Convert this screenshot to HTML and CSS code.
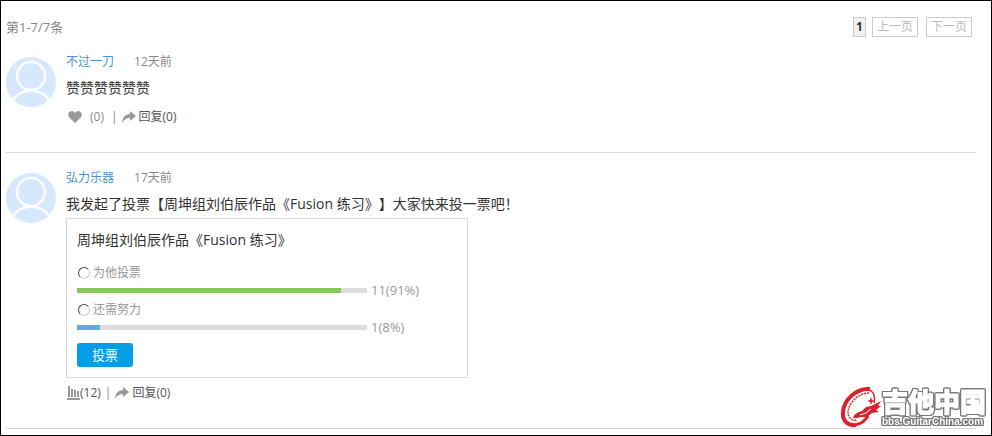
FILE: index.html
```html
<!DOCTYPE html>
<html lang="zh-CN">
<head>
    <meta charset="UTF-8">
    <meta name="viewport" content="width=device-width, initial-scale=1.0">
    <title>动态</title>
    <link rel="stylesheet" href="styles.css">
</head>
<body>
    <!-- shared icons -->
    <svg class="sprite" width="0" height="0" aria-hidden="true">
        <symbol id="icon-avatar" viewBox="0 0 50 50">
            <circle cx="25" cy="25" r="25" fill="#d5e8fc"/>
            <circle cx="25" cy="19" r="14" fill="none" stroke="#fff" stroke-width="2.4"/>
            <path d="M7 43C11 37 17 33.800 25 33.800S39 37 43 43" fill="none" stroke="#fff" stroke-width="2.400"/>
        </symbol>
        <symbol id="icon-reply" viewBox="0 0 14 12">
            <path d="M8 0l6 5-6 5V7C4.500 7 2 8.500 0 12 .5 6 3.500 3.200 8 3z" fill="#999"/>
        </symbol>
        <symbol id="icon-heart" viewBox="0 0 14 12">
            <path d="M7 12L1.300 6.600C-.6 4.600 0 .3 3.500 0 5.200 0 6.400.8 7 2 7.600.8 8.800 0 10.500 0 14 .3 14.600 4.600 12.700 6.600z" fill="#999"/>
        </symbol>
        <symbol id="icon-chart" viewBox="0 0 13 14">
            <path d="M1 0h2v11H1zM4 3h2v8H4zM7 4h2v7H7zM10 5h2v6h-2zM0 12h13v2H0z" fill="#999"/>
        </symbol>
    </svg>

    <div class="page">
        <div class="toolbar">
            <span class="count">第1-7/7条</span>
            <div class="pager">
                <span class="current">1</span>
                <button type="button" disabled>上一页</button>
                <button type="button" disabled>下一页</button>
            </div>
        </div>

        <div class="feed-item">
            <svg class="avatar"><use href="#icon-avatar"/></svg>
            <div class="feed-body">
                <div class="feed-meta">
                    <a href="#">不过一刀</a>
                    <span>12天前</span>
                </div>
                <p class="feed-text">赞赞赞赞赞赞</p>
                <div class="actions">
                    <a href="#" class="like"><svg class="icon-heart"><use href="#icon-heart"/></svg>(0)</a>
                    <span class="divider">|</span>
                    <a href="#" class="reply"><svg class="icon-reply"><use href="#icon-reply"/></svg>回复(0)</a>
                </div>
            </div>
        </div>

        <div class="feed-item">
            <svg class="avatar"><use href="#icon-avatar"/></svg>
            <div class="feed-body">
                <div class="feed-meta">
                    <a href="#">弘力乐器</a>
                    <span>17天前</span>
                </div>
                <p class="feed-text">我发起了投票【周坤组刘伯辰作品《Fusion 练习》】大家快来投一票吧！</p>
                <form class="poll">
                    <h3>周坤组刘伯辰作品《Fusion 练习》</h3>
                    <div class="option">
                        <label for="vote-yes"><input type="radio" name="vote" id="vote-yes">为他投票</label>
                        <div class="result">
                            <div class="track"><div class="fill green" style="width: 91%"></div></div>
                            <span>11(91%)</span>
                        </div>
                    </div>
                    <div class="option">
                        <label for="vote-no"><input type="radio" name="vote" id="vote-no">还需努力</label>
                        <div class="result">
                            <div class="track"><div class="fill blue" style="width: 8%"></div></div>
                            <span>1(8%)</span>
                        </div>
                    </div>
                    <button type="button" class="vote-btn">投票</button>
                </form>
                <div class="actions">
                    <a href="#" class="votes"><svg class="icon-chart"><use href="#icon-chart"/></svg>(12)</a>
                    <span class="divider">|</span>
                    <a href="#" class="reply"><svg class="icon-reply"><use href="#icon-reply"/></svg>回复(0)</a>
                </div>
            </div>
        </div>

        <!-- forum watermark -->
        <div class="watermark">
            <svg class="dragon" viewBox="0 0 42 42" aria-hidden="true">
                <g fill="none" stroke="#d8232a">
                    <path d="M30 2C17 1 4 12 3 25c-1 9 5 14 13 13" stroke-width="4"/>
                    <path d="M29 6C19 6 9 15 8 25c0 6 4 9 9 8" stroke-width="1.500" stroke-dasharray="2 1"/>
                    <path d="M24 2c8 0 12 5 10 14" stroke-width="1.500"/>
                    <path d="M15 38c6-1 10-4 13-9" stroke-width="3"/>
                </g>
                <g fill="#d8232a">
                    <path d="M31 10l1 3 3 1-3 1-1 3-1-3-3-1 3-1z"/>
                    <path d="M13 31c1-4 5-6 9-7l4-4 5-1 10-5-3 5 3 0-5 4 3 2-7 1-5 4-6 0-4 1z"/>
                </g>
                <path d="M20 28l6-2 5-4" fill="none" stroke="#fff"/>
            </svg>
            <div class="mark-text">
                <strong>吉他中国</strong>
                <span>bbs.GuitarChina.com</span>
            </div>
        </div>
    </div>
</body>
</html>
```
FILE: styles.css
```css
* {
    margin: 0;
    padding: 0;
    box-sizing: border-box;
}

body {
    background: #fff;
    color: #333;
    font-family: 'Open Sans', 'Noto Sans CJK SC', sans-serif;
    font-size: 12px;
    line-height: 20px;
    text-spacing-trim: space-all;
}

a {
    color: #4a90d2;
    text-decoration: none;
}

button,
input {
    font-family: inherit;
}

.sprite {
    position: absolute;
}

.page {
    position: relative;
    min-height: 100vh;
    padding: 16px 15px 0 5px;
    border: 1px solid #000;
}

.toolbar {
    display: flex;
    justify-content: space-between;
    color: #888;
    font-size: 13px;
}

.pager {
    display: flex;
    gap: 8px;
    padding-right: 4px;
}

.pager .current,
.pager button {
    height: 20px;
    border: 1px solid #ccc;
    font-size: 12px;
    line-height: 18px;
}

.pager .current {
    width: 13px;
    margin-right: -2px;
    background: #f2f2f2;
    color: #333;
    font-weight: 700;
    text-align: center;
}

.pager button {
    width: 46px;
    background: #fff;
    color: #bbb;
}

.feed-item {
    display: flex;
    gap: 10px;
    padding: 15px 0 25px;
    border-bottom: 1px solid #d9d9d9;
}

.avatar {
    flex: none;
    width: 50px;
    height: 50px;
    margin-top: 5px;
}

.feed-body {
    flex: 1;
}

.feed-meta {
    display: flex;
    gap: 20px;
    color: #888;
}

.feed-text {
    margin: 4px 0 2px;
    font-size: 14px;
    line-height: 24px;
}

.actions {
    display: flex;
    gap: 4px;
    padding-top: 5px;
}

.actions a {
    display: flex;
    align-items: center;
    color: #555;
}

.actions .like {
    gap: 8px;
    padding: 0 3px 0 2px;
    color: #888;
}

.actions .reply {
    gap: 3px;
}

.actions .votes {
    padding-left: 1px;
}

.divider {
    color: #888;
}

.icon-heart,
.icon-reply {
    width: 14px;
    height: 12px;
}

.icon-chart {
    width: 13px;
    height: 14px;
}

.poll {
    max-width: 402px;
    padding: 10px;
    border: 1px solid #d9d9d9;
}

.poll h3 {
    margin-bottom: 13px;
    font-size: 14px;
    font-weight: 400;
    line-height: 22px;
}

.option {
    margin-bottom: 2px;
    color: #999;
}

.option label {
    display: flex;
    align-items: center;
    gap: 3px;
    line-height: 18px;
}

.option input {
    appearance: none;
    width: 12px;
    height: 12px;
    margin-left: 1px;
    border: 1px solid;
    border-color: #444 #ccc #ccc #444;
    border-radius: 50%;
}

.option input:checked {
    background: radial-gradient(#333 2px, #fff 3px);
}

.result {
    display: flex;
    align-items: center;
    gap: 4px;
    font-size: 13px;
    line-height: 17px;
}

.track {
    flex: 0 1 290px;
    height: 5px;
    background: #ddd;
}

.fill {
    height: 100%;
}

.fill.green {
    background: #86c662;
}

.fill.blue {
    background: #5aabe3;
}

.vote-btn {
    display: block;
    width: 56px;
    height: 24px;
    margin-top: 7px;
    border: 0;
    border-radius: 3px;
    background: #049ee8;
    color: #fff;
    font-size: 13px;
    line-height: 24px;
}

/* sits over the bottom right corner of the feed */
.watermark {
    position: absolute;
    right: 5px;
    bottom: 6px;
    display: flex;
    align-items: center;
}

.dragon {
    width: 42px;
    height: 42px;
}

.mark-text {
    display: flex;
    flex-direction: column;
    color: #fff;
    font-weight: 700;
    -webkit-text-stroke: 1px #fff;
    filter: drop-shadow(1px 0 #777) drop-shadow(-1px 0 #777) drop-shadow(0 1px #777) drop-shadow(0 -1px #777);
}

.mark-text strong {
    font-family: 'Noto Sans CJK SC', sans-serif;
    font-size: 26px;
    line-height: 28px;
}

.mark-text span {
    font-family: 'Liberation Sans Narrow', 'Liberation Sans', sans-serif;
    font-size: 10px;
    line-height: 14px;
    -webkit-text-stroke: 0;
}
```
